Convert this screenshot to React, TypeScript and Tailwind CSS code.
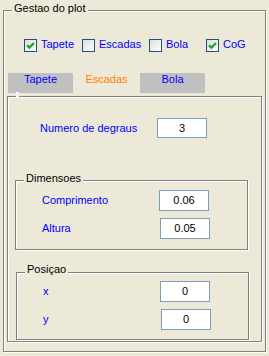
import type { ReactNode } from "react";

function Group({ label, className, labelTop = "-top-[9px]", children }: { label?: string; className: string; labelTop?: string; children?: ReactNode }) {
    return (
        <div className={`relative border border-[#808080] shadow-[inset_1px_1px_0_#fff,1px_1px_0_#fff] ${className}`}>
            {label && (
                <span className={`absolute left-[8px] ${labelTop} px-[2px] bg-[#ece9d8] text-black whitespace-nowrap`}>
                    {label}
                </span>
            )}
            {children}
        </div>
    );
}

function Check({ label, checked, width }: { label: string; checked?: boolean; width: string }) {
    return (
        <div className={`flex items-start gap-[4px] ${width}`}>
            <span className="mt-[1px] w-[13px] h-[13px] shrink-0 border border-[#1c5180] bg-gradient-to-br from-[#dcdcd7] to-white flex items-center justify-center">
                {checked && (
                    <svg width="9" height="9" viewBox="0 0 9 9">
                        <path d="M1 4.2 L3.4 6.6 L8 2" stroke="#21a121" strokeWidth="2.2" fill="none" />
                    </svg>
                )}
            </span>
            <span className="text-[#0000ff]">{label}</span>
        </div>
    );
}

function Field({ label, value, labelWidth, h = "h-[21px]", mt, ml = "ml-[26px]" }: { label: string; value: string; labelWidth: string; h?: string; mt: string; ml?: string }) {
    return (
        <div className={`flex items-center ${mt} ${ml}`}>
            <span className={`${labelWidth} text-[#0000ff]`}>{label}</span>
            <div className={`w-[50px] ${h} border border-[#7f9db9] bg-white flex items-center justify-center text-black`}>
                {value}
            </div>
        </div>
    );
}

export default function App() {
    return (
        <div className="w-[269px] h-[356px] overflow-hidden bg-[#ece9d8] pt-[10px] pl-[3px] font-['Liberation_Sans',Arial,sans-serif] text-[11px] leading-[13px]">
            <Group label="Gestao do plot" className="w-[263px] h-[342px]">
                <div className="flex mt-[27px] ml-[20px]">
                    <Check label="Tapete" checked width="w-[58px]" />
                    <Check label="Escadas" width="w-[67px]" />
                    <Check label="Bola" width="w-[57px]" />
                    <Check label="CoG" checked width="w-[50px]" />
                </div>

                <div className="flex mt-[21px] ml-[4px] h-[20px]">
                    <div className="w-[65px] bg-[#c0c0c0] text-center text-[#0000ff]">Tapete</div>
                    <div className="w-[67px] text-center text-[#ff8000]">Escadas</div>
                    <div className="w-[65px] bg-[#c0c0c0] text-center text-[#0000ff]">Bola</div>
                </div>

                <Group className="mt-[3px] ml-[3px] w-[255px] h-[246px]">
                    <span className="absolute left-[8px] -top-[5px] w-[3px] h-[5px] bg-[#f7f6f1]" />

                    <Field label="Numero de degraus" value="3" labelWidth="w-[117px]" h="h-[20px]" mt="mt-[21px]" ml="ml-[32px]" />

                    <Group label="Dimensoes" className="mt-[42px] ml-[7px] w-[233px] h-[70px]">
                        <Field label="Comprimento" value="0.06" labelWidth="w-[117px]" mt="mt-[9px]" />
                        <Field label="Altura" value="0.05" labelWidth="w-[118px]" mt="mt-[7px]" />
                    </Group>

                    <Group label="Posiçao" labelTop="-top-[10px]" className="mt-[22px] ml-[8px] w-[233px] h-[68px]">
                        <Field label="x" value="0" labelWidth="w-[117px]" mt="mt-[8px]" />
                        <Field label="y" value="0" labelWidth="w-[118px]" mt="mt-[7px]" />
                    </Group>
                </Group>
            </Group>
        </div>
    );
}
